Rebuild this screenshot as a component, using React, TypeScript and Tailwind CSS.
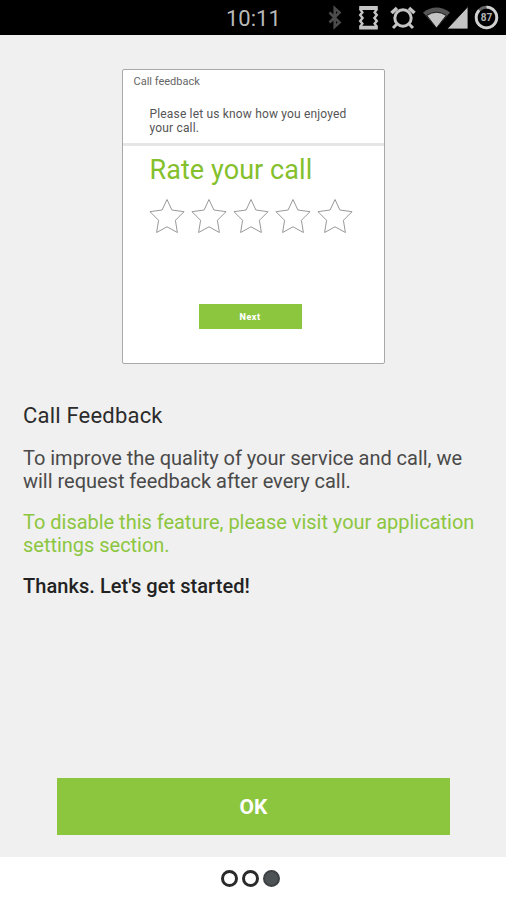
const stars = [1, 2, 3, 4, 5];
const pages = [1, 2, 3];
const currentPage = 3;

function StatusBar() {
  return (
    <header className="flex h-[35px] shrink-0 bg-black pl-[226px]">
      <span className="w-[102px] pt-[5px] text-[22px] leading-7 text-[#b9b9b9]">10:11</span>

      {/* Bluetooth */}
      <svg width="14" height="35" viewBox="0 0 14 35" fill="none" stroke="#4b4b4b" strokeWidth="2.6">
        <path d="M1.5 12.5l10 10-4.8 4.3V8.2l4.8 4.3-10 10" />
      </svg>

      {/* Screen rotation */}
      <svg className="ml-4" width="21" height="35" viewBox="0 0 21 35" fill="none" stroke="#c4c4c4" strokeWidth="2.4">
        <path d="M1.2 8h18.6M1.2 27.6h18.6" strokeWidth="3.8" />
        <path d="M2 9L4.4 12.4 2.2 15 4.6 18 2.2 21 4.4 23.6 2 27M19 9L16.6 12.4 18.8 15 16.4 18 18.8 21 16.6 23.6 19 27" />
      </svg>

      {/* Alarm */}
      <svg className="ml-[11px]" width="26" height="35" viewBox="0 0 26 35" fill="none" stroke="#c4c4c4" strokeWidth="3">
        <circle cx="13" cy="18" r="8.2" />
        <path d="M1.5 13L7 8M24.5 13L19 8" strokeWidth="3.6" />
        <path d="M7.2 23.8L3 28M18.8 23.8L23 28" />
      </svg>

      {/* Wifi and signal strength */}
      <svg className="ml-[7px]" width="46" height="35" viewBox="0 0 46 35">
        <path d="M0 12.5Q13.5 2.5 27 12.5L13.5 28Z" fill="#555" />
        <path d="M3.8 15.5Q13.5 9 23.2 15.5L13.5 28Z" fill="#c4c4c4" stroke="#000" strokeWidth="0.8" />
        <path d="M24 29L45 6.5V29Z" fill="#c4c4c4" stroke="#000" strokeWidth="0.8" />
      </svg>

      {/* Battery */}
      <svg className="ml-[5px]" width="26" height="35" viewBox="0 0 26 35">
        <circle cx="12.5" cy="17.5" r="10.3" fill="none" stroke="#666" strokeWidth="2.8" />
        <path d="M12.5 7.2A10.3 10.3 0 1 1 5.2 10.2" fill="none" stroke="#d0d0d0" strokeWidth="2.8" />
        <text x="12.5" y="21.2" textAnchor="middle" fill="#b5b5b5" fontSize="10" fontWeight="700">87</text>
      </svg>
    </header>
  );
}

function FeedbackPreview() {
  return (
    <section className="mx-auto h-[295px] w-[263px] rounded-xs border-[1.5px] border-[#a8a8a8] bg-white">
      <h2 className="pt-[5px] pl-[11px] text-[11px] leading-[14px] text-[#666]">Call feedback</h2>
      <p className="mt-[18px] h-[34px] pl-[27px] text-[12px] leading-[14px] tracking-[0.17px] text-[#555]">
        Please let us know how you enjoyed
        <br />
        your call.
      </p>
      <div className="mt-0.5 h-[3px] bg-[#e6e6e6]" />
      <h3 className="mt-2 pl-[27px] text-[27px] leading-8 tracking-[0.07px] text-[#84c02c]">Rate your call</h3>
      <div className="mt-3 flex gap-[5px] pl-[26px]">
        {stars.map((star) => (
          <svg key={star} width="37" height="36" viewBox="0 0 37 36" fill="none" stroke="#999">
            <path d="M18 1.5L22.9 12L35 13.7L26.4 22.3L28.4 34.5L18 28.8L7.6 34.5L9.6 22.3L1 13.7L13.1 12Z" />
          </svg>
        ))}
      </div>
      <button className="mt-[70px] ml-[76px] block h-[25px] w-[103px] bg-[#8cc63f] text-[9px] leading-[26px] font-extrabold tracking-[0.5px] text-white">
        Next
      </button>
    </section>
  );
}

export default function App() {
  return (
    <div className="flex h-[900px] w-[506px] flex-col overflow-hidden bg-white font-['Roboto',sans-serif]">
      <StatusBar />

      <main className="flex flex-1 flex-col bg-[#f0f0f0] pt-[34px]">
        <FeedbackPreview />

        <div className="mt-10 px-[23px] text-[20px] leading-[23px] tracking-[-0.02px] text-[#4a4a4a]">
          <h1 className="text-[22px] leading-6 tracking-[0.2px] text-[#2b2b2b]">Call Feedback</h1>
          <p className="mt-[19px] whitespace-nowrap">
            To improve the quality of your service and call, we
            <br />
            will request feedback after every call.
          </p>
          <p className="mt-[18px] whitespace-nowrap text-[#8cc63f]">
            To disable this feature, please visit your application
            <br />
            settings section.
          </p>
          <p className="mt-[18px] font-medium tracking-[0.06px] text-[#222]">Thanks. Let's get started!</p>
        </div>

        <button className="mt-auto mb-[22px] ml-[57px] h-[57px] w-[393px] bg-[#8cc63f] pt-[3px] text-[21px] font-bold text-white">
          OK
        </button>
      </main>

      <footer className="flex h-[43px] shrink-0 justify-center gap-1 pt-[13px] pr-[6px]">
        {pages.map((page) => (
          <span
            key={page}
            className={
              page === currentPage
                ? 'size-[17px] rounded-full border-2 border-[#3d4143] bg-[#4d5254]'
                : 'size-[17px] rounded-full border-3 border-[#2a2a2a]'
            }
          />
        ))}
      </footer>
    </div>
  );
}
